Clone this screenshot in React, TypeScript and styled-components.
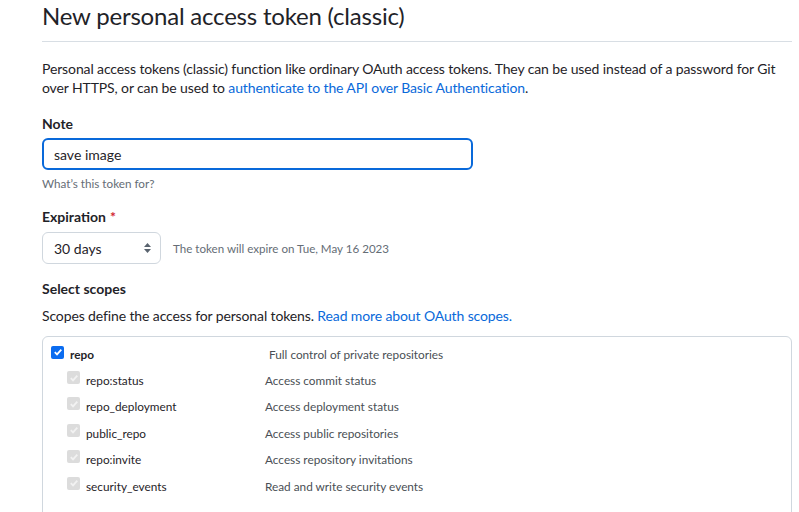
import React from "react";
import styled, { createGlobalStyle } from "styled-components";

const Global = createGlobalStyle`
  html, body { margin: 0; padding: 0; background: #ffffff; }
  body { font-family: Lato, "Open Sans", "Liberation Sans", sans-serif; color: #1f2328; }
`;

const Page = styled.div`
  width: 799px;
  height: 512px;
  overflow: hidden;
  padding: 0 7px 0 42px;
  box-sizing: border-box;
`;

const Title = styled.h2`
  margin: 0;
  padding-top: 1px;
  height: 40px;
  box-sizing: content-box;
  font-size: 24px;
  font-weight: 400;
  line-height: 29px;
  letter-spacing: -0.2px;
  border-bottom: 1px solid #d8dee4;
`;

const Lead = styled.p`
  margin: 18px 0 0;
  font-size: 14px;
  letter-spacing: -0.12px;
  line-height: 18.5px;
`;

const Link = styled.a`
  color: #0969da;
  text-decoration: none;
`;

const Label = styled.div<{ $mt: number }>`
  margin-top: ${(p) => p.$mt}px;
  font-size: 14px;
  font-weight: 700;
  line-height: 20px;
`;

const Req = styled.span`
  color: #d1242f;
  margin-left: 4px;
`;

const Input = styled.div`
  margin-top: 4px;
  width: 431px;
  height: 32px;
  box-sizing: border-box;
  border: 2px solid #0969da;
  border-radius: 6px;
  padding: 0 10px;
  display: flex;
  align-items: center;
  font-size: 14px;
`;

const Hint = styled.div`
  margin-top: 5px;
  font-size: 11.7px;
  color: #656d76;
  line-height: 16px;
`;

const ExpRow = styled.div`
  margin-top: 5px;
  display: flex;
  align-items: center;
  gap: 12px;
`;

const Select = styled.div`
  width: 119px;
  height: 32px;
  box-sizing: border-box;
  border: 1px solid #d0d7de;
  border-radius: 6px;
  padding: 0 8px 0 11px;
  display: flex;
  align-items: center;
  justify-content: space-between;
  font-size: 14px;
`;

const Note = styled.span`
  font-size: 11.6px;
  color: #656d76;
`;

const Desc = styled.div`
  margin-top: 7px;
  font-size: 14px;
  letter-spacing: -0.12px;
  line-height: 20px;
`;

const Box = styled.div`
  margin-top: 10px;
  border: 1px solid #d0d7de;
  border-radius: 6px;
  padding: 4px 0 0 8px;
  height: 200px;
  box-sizing: border-box;
`;

const Row = styled.div<{ $child?: boolean }>`
  display: grid;
  grid-template-columns: ${(p) => (p.$child ? "19px 179px 1fr" : "19px 199px 1fr")};
  align-items: center;
  height: 26.4px;
  padding-left: ${(p) => (p.$child ? "16px" : "0")};
  font-size: 11.8px;
`;

const Name = styled.span<{ $bold?: boolean }>`
  font-weight: ${(p) => (p.$bold ? 700 : 400)};
  color: #1f2328;
`;

const ScopeDesc = styled.span`
  color: #4a4f55;
`;

const Check = styled.span<{ $on?: boolean }>`
  width: 13px;
  height: 13px;
  border-radius: 2px;
  background: ${(p) => (p.$on ? "#0b6cf0" : "#dcdcdc")};
  display: inline-flex;
  align-items: center;
  justify-content: center;
  margin-top: ${(p) => (p.$on ? "-4px" : "-6px")};
`;

const CheckMark = ({ on }: { on?: boolean }) => (
  <Check $on={on}>
    <svg width="10" height="10" viewBox="0 0 10 10">
      <path d="M1.8 5.2 L4 7.4 L8.3 2.6" fill="none" stroke={on ? "#fff" : "#f2f2f2"} strokeWidth="1.8" />
    </svg>
  </Check>
);

const Arrows = () => (
  <svg width="9" height="12" viewBox="0 0 9 12">
    <path d="M4.5 1 L8 5 H1 Z" fill="#59636e" />
    <path d="M4.5 11 L8 7 H1 Z" fill="#59636e" />
  </svg>
);

const scopes = [
  ["repo:status", "Access commit status"],
  ["repo_deployment", "Access deployment status"],
  ["public_repo", "Access public repositories"],
  ["repo:invite", "Access repository invitations"],
  ["security_events", "Read and write security events"],
];

export default function App() {
  return (
    <Page>
      <Global />
      <Title>New personal access token (classic)</Title>
      <Lead>
        Personal access tokens (classic) function like ordinary OAuth access tokens. They can be used instead of a password for Git over HTTPS, or can be used to{" "}
        <Link>authenticate to the API over Basic Authentication</Link>.
      </Lead>
      <Label $mt={17}>Note</Label>
      <Input>save image</Input>
      <Hint>What’s this token for?</Hint>
      <Label $mt={16}>
        Expiration<Req>*</Req>
      </Label>
      <ExpRow>
        <Select>
          <span>30 days</span>
          <Arrows />
        </Select>
        <Note>The token will expire on Tue, May 16 2023</Note>
      </ExpRow>
      <Label $mt={15}>Select scopes</Label>
      <Desc>
        Scopes define the access for personal tokens. <Link>Read more about OAuth scopes.</Link>
      </Desc>
      <Box>
        <Row>
          <CheckMark on />
          <Name $bold>repo</Name>
          <ScopeDesc>Full control of private repositories</ScopeDesc>
        </Row>
        {scopes.map(([n, d]) => (
          <Row $child key={n}>
            <CheckMark />
            <Name>{n}</Name>
            <ScopeDesc>{d}</ScopeDesc>
          </Row>
        ))}
      </Box>
    </Page>
  );
}
